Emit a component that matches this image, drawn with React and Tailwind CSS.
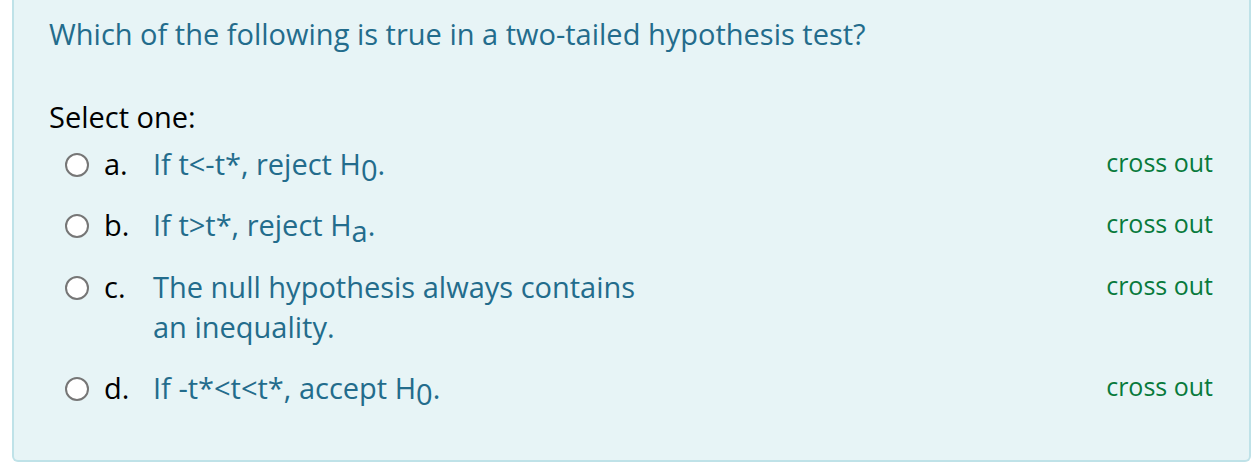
import React from 'react';

const Sub = ({ children }) => <span className="align-[-0.22em] leading-none">{children}</span>;

const options = [
    { letter: 'a.', text: <>If t&lt;-t*, reject H<Sub>0</Sub>.</> },
    { letter: 'b.', text: <>If t&gt;t*, reject H<Sub>a</Sub>.</> },
    { letter: 'c.', text: <>The null hypothesis always contains<br />an inequality.</> },
    { letter: 'd.', text: <>If -t*&lt;t&lt;t*, accept H<Sub>0</Sub>.</> },
];

export default function App() {
    return (
        <div className="w-[1255px] h-[470px] bg-white font-['Open_Sans',sans-serif]">
            <div className="ml-[12px] w-[1239px] h-[462px] bg-[#e7f4f6] border-2 border-t-0 border-[#bfe2e8] rounded-b-[6px] pl-[35px] pr-[36px]">
                {/* Question */}
                <p className="pt-[14px] text-[29px] leading-[40px] text-[#236c8c]">
                    Which of the following is true in a two-tailed hypothesis test?
                </p>

                <p className="mt-[43px] text-[29px] leading-[40px] text-black">Select one:</p>

                <div className="mt-[7px] flex flex-col">
                    {options.map((opt, idx) => (
                        <div key={idx} className="flex items-start mb-[21px]">
                            <span className="mt-[9px] ml-[16px] w-[24px] h-[24px] rounded-full border-2 border-[#767676] bg-white shrink-0" />
                            <span className="ml-[15px] w-[49px] text-[29px] leading-[40px] text-black">{opt.letter}</span>
                            <span className="flex-1 text-[29px] leading-[40px] text-[#236c8c]">{opt.text}</span>
                            <span className="text-[25px] leading-[36px] text-[#087a3c]">cross out</span>
                        </div>
                    ))}
                </div>
            </div>
        </div>
    );
}
